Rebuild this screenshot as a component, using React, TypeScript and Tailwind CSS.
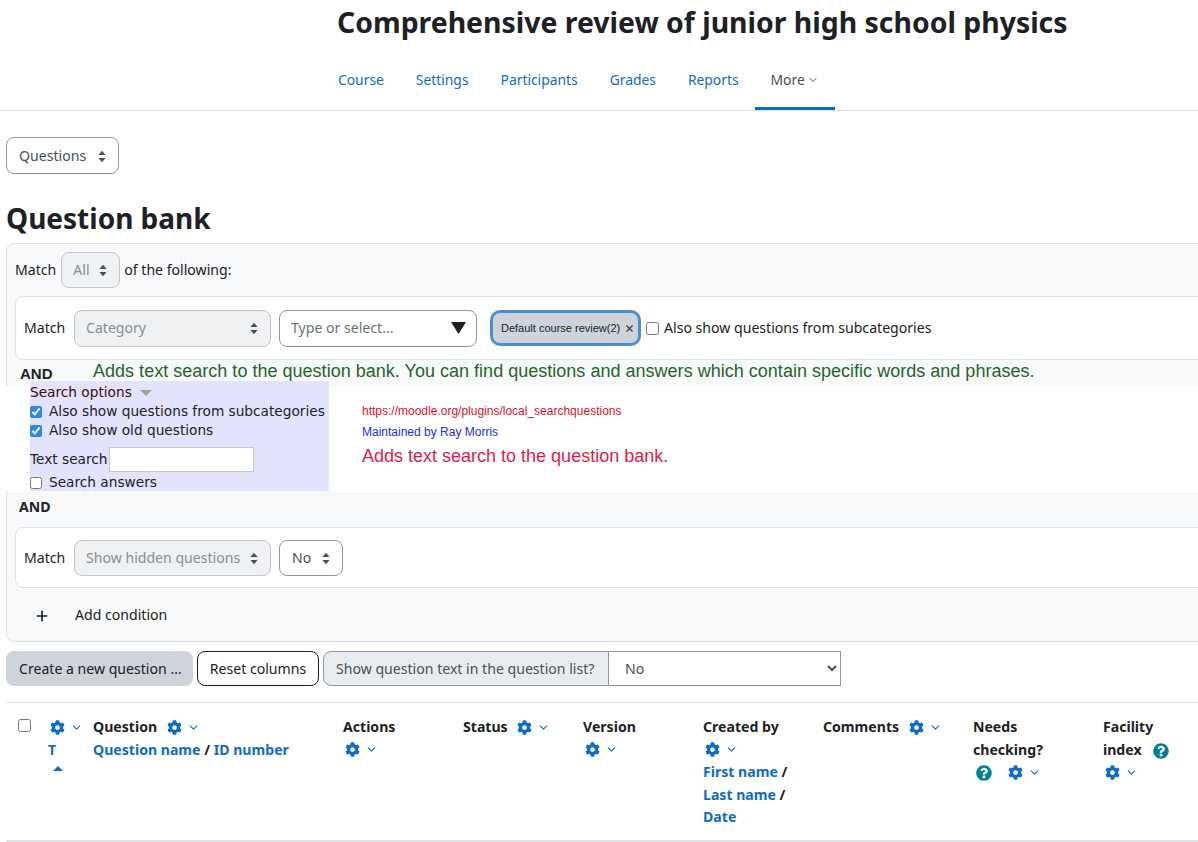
import React from "react";
import { ChevronDown, Plus, X } from "lucide-react";
import { FaCog, FaQuestionCircle } from "react-icons/fa";

const UpDown = () => (
  <svg width="8" height="13" viewBox="0 0 8 13" className="shrink-0" fill="#495057">
    <path d="M4 .8 7.6 5H.4zM4 12.2.4 8h7.2z" />
  </svg>
);

const Sel = ({ label, cls, disabled = true }: { label: string; cls: string; disabled?: boolean }) => (
  <div className={`flex items-center justify-between border rounded-lg pr-3 ${disabled ? "pl-[11px] bg-[#eff1f3] border-[#bfc4c9] text-[#868e96]" : "pl-3 bg-white border-[#8f959e] text-[#495057]"} ${cls}`}>
    <span className="whitespace-nowrap">{label}</span>
    <UpDown />
  </div>
);

const Gear = ({ cls = "" }: { cls?: string }) => (
  <span className={`inline-flex items-center gap-[5px] align-middle text-[#0f6cbf] -translate-y-[1px] ml-[2px] ${cls}`}>
    <FaCog size={15} />
    <ChevronDown size={13} strokeWidth={2} />
  </span>
);

const Help = ({ cls = "" }: { cls?: string }) => (
  <FaQuestionCircle size={16} className={`inline-block text-[#008196] ${cls}`} />
);

const Tab = ({ t, active }: { t: string; active?: boolean }) => (
  <div className={`h-[60px] px-4 flex items-center ${active ? "border-b-[3px] border-[#0f6cbf] text-[#495057] pt-[3px]" : "text-[#0f6cbf]"}`}>
    {t}
    {active && <ChevronDown size={12} strokeWidth={2} className="ml-[2px]" />}
  </div>
);

const Link = ({ children }: { children: React.ReactNode }) => <span className="text-[#0f6cbf]">{children}</span>;

export default function App() {
  return (
    <div className="w-[1198px] h-[842px] overflow-hidden bg-white text-[#1d2125] text-[14.1px] leading-[22.5px] font-['Noto_Sans',sans-serif]">
      <div className="pl-[337px] pt-[2px] h-[50px] text-[28.4px] leading-[40px] font-bold whitespace-nowrap">
        Comprehensive review of junior high school physics
      </div>
      <div className="h-[61px] border-b border-[#dee2e6] pl-[322px] flex text-[13.85px]">
        {["Course", "Settings", "Participants", "Grades", "Reports"].map((t) => <Tab key={t} t={t} />)}
        <Tab t="More" active />
      </div>

      <div className="pl-[6px] pt-[26px]">
        <Sel label="Questions" disabled={false} cls="w-[113px] h-[37px] pt-[2px] border-[#8f959e]" />
      </div>
      <div className="pl-[6px] mt-[25px] h-[45px] text-[28px] leading-[38px] font-bold">Question bank</div>

      {/* Filter panel: upper part */}
      <div className="ml-[6px] mt-[-1px] w-[1300px] border-t border-l border-[#dee2e6] rounded-tl-lg bg-[#f8f9fa] pl-2 h-[143px]">
        <div className="flex items-center h-[52px] gap-1">
          <span>Match</span>
          <Sel label="All" cls="w-[59px] h-[36px] ml-[1px]" />
          <span>of the following:</span>
        </div>
        <div className="h-[64px] bg-white border border-[#dee2e6] rounded-lg flex items-center pl-2 w-[1260px]">
          <span className="w-[50px]">Match</span>
          <Sel label="Category" cls="w-[197px] h-[37px]" />
          <div className="ml-2 w-[198px] h-[37px] bg-white border border-[#8f959e] rounded-lg flex items-center justify-between pl-[11px] pr-[10px] text-[#6a737b]">
            <span>Type or select...</span>
            <svg width="15" height="12" viewBox="0 0 15 12"><path d="M0 0h15L7.5 12z" fill="#1d2125" /></svg>
          </div>
          <div className="ml-[13px] w-[151px] h-[36px] bg-[#ced4da] border-[3px] border-[#4a90d0] rounded-[10px] flex items-center pl-[8px] text-[11px] font-['Liberation_Sans',sans-serif] whitespace-nowrap">
            Default course review(2)
            <X size={11} strokeWidth={2.5} className="ml-[4px] text-[#343a40]" />
          </div>
          <input type="checkbox" className="ml-[5px] w-[13px] h-[13px]" />
          <span className="ml-[5px]">Also show questions from subcategories</span>
        </div>
        <div className="flex h-[26px] font-['Liberation_Sans',sans-serif]">
          <span className="font-bold text-[15px] pl-[5px] pt-[3px] w-[78px]">AND</span>
          <span className="text-[18px] leading-[23px] tracking-[0.017px] text-[#27632a]">Adds text search to the question bank. You can find questions and answers which contain specific words and phrases.</span>
        </div>
      </div>

      {/* Plugin strip */}
      <div className="h-[105px] bg-white flex">
        <div className="ml-[30px] mt-[-5px] w-[299px] h-[110px] bg-[#e3e3fd] text-[13.7px] leading-[19px] font-['DejaVu_Sans',sans-serif] shrink-0 relative">
          <div className="flex items-center h-[21px] pt-[2px] text-[#3b0a14]">
            Search options
            <svg width="12" height="6" viewBox="0 0 12 6" className="ml-2"><path d="M0 0h12L6 6z" fill="#a0a0a0" /></svg>
          </div>
          <label className="flex items-center h-[19px]"><input type="checkbox" defaultChecked className="w-[12px] h-[12px] mr-[7px] accent-[#2f86eb]" />Also show questions from subcategories</label>
          <label className="flex items-center h-[19px]"><input type="checkbox" defaultChecked className="w-[12px] h-[12px] mr-[7px] accent-[#2f86eb]" />Also show old questions</label>
          <div className="flex items-center mt-[7px] h-[25px]">Text search<div className="ml-[1px] w-[145px] h-[25px] bg-white border border-[#c8c8c8]" /></div>
          <label className="flex items-center h-[19px] mt-[1px]"><input type="checkbox" className="w-[12px] h-[12px] mr-[7px]" />Search answers</label>
        </div>
        <div className="ml-[33px] pt-[15px] font-['Liberation_Sans',sans-serif]">
          <div className="text-[12px] leading-[21px] text-[#e0102a]">https://moodle.org/plugins/local_searchquestions</div>
          <div className="text-[12px] leading-[21px] text-[#2030d8]">Maintained by Ray Morris</div>
          <div className="text-[18px] leading-[27px] text-[#dc1e4a]">Adds text search to the question bank.</div>
        </div>
      </div>

      {/* Filter panel: lower part */}
      <div className="ml-[6px] w-[1300px] h-[151px] border-b border-l border-[#dee2e6] rounded-bl-lg bg-[#f8f9fa] pl-2">
        <div className="h-[36px] pl-[4px] pt-[5px] font-bold">AND</div>
        <div className="h-[61px] w-[1260px] bg-white border border-[#dee2e6] rounded-lg flex items-center pl-2 pt-[1px]">
          <span className="w-[50px]">Match</span>
          <Sel label="Show hidden questions" cls="w-[197px] h-[36px] pt-[1px]" />
          <Sel label="No" disabled={false} cls="ml-2 w-[64px] h-[36px] pt-[1px] text-[#1d2125]" />
        </div>
        <div className="flex items-center h-[53px] pl-[19px] pt-[2px]">
          <Plus size={16} strokeWidth={2.5} />
          <span className="ml-[25px]">Add condition</span>
        </div>
      </div>

      {/* Action row */}
      <div className="flex pl-[6px] mt-[9px] h-[35px]">
        <div className="w-[187px] bg-[#ced4da] rounded-lg flex items-center pl-[13px] pt-[2px] whitespace-nowrap">Create a new question ...</div>
        <div className="ml-[4px] w-[122px] bg-white border border-[#1d2125] rounded-lg flex items-center justify-center pt-[2px] whitespace-nowrap">Reset columns</div>
        <div className="ml-[4px] w-[286px] bg-[#e9ecef] border border-[#8f959e] rounded-l-lg flex items-center pl-3 pt-[2px] text-[#495057] whitespace-nowrap">Show question text in the question list?</div>
        <select defaultValue="No" className="w-[232px] bg-white border border-[#8f959e] border-l-0 pl-3 text-[#495057] outline-none">
          <option>No</option>
        </select>
      </div>

      {/* Table head */}
      <div className="ml-[6px] mt-[16px] w-[1300px] h-[140px] border-t border-b-2 border-[#dee2e6] grid grid-cols-[42px_45px_250px_120px_120px_120px_120px_150px_130px_130px] pl-0 pt-[13px] font-bold">
        <div className="pl-[12px]"><input type="checkbox" className="w-[13px] h-[13px]" /></div>
        <div>
          <Gear />
          <div className="text-[#0f6cbf] pl-0">T</div>
          <svg width="10" height="5" viewBox="0 0 10 5" className="ml-[5px] mt-[5px]"><path d="M5 0l5 5H0z" fill="#0f6cbf" /></svg>
        </div>
        <div>
          <div>Question <Gear cls="ml-[6px]" /></div>
          <div><Link>Question name</Link> / <Link>ID number</Link></div>
        </div>
        <div>Actions<div><Gear /></div></div>
        <div>Status <Gear cls="ml-[6px]" /></div>
        <div>Version<div><Gear /></div></div>
        <div>
          Created by
          <div><Gear /></div>
          <div><Link>First name</Link> /</div>
          <div><Link>Last name</Link> /</div>
          <div><Link>Date</Link></div>
        </div>
        <div>Comments <Gear cls="ml-[6px]" /></div>
        <div>
          Needs<br />checking?
          <div><Help cls="ml-[3px] mr-[14px] align-middle" /><Gear /></div>
        </div>
        <div>
          Facility<br />index <Help cls="ml-[8px] align-middle" />
          <div><Gear /></div>
        </div>
      </div>
    </div>
  );
}
